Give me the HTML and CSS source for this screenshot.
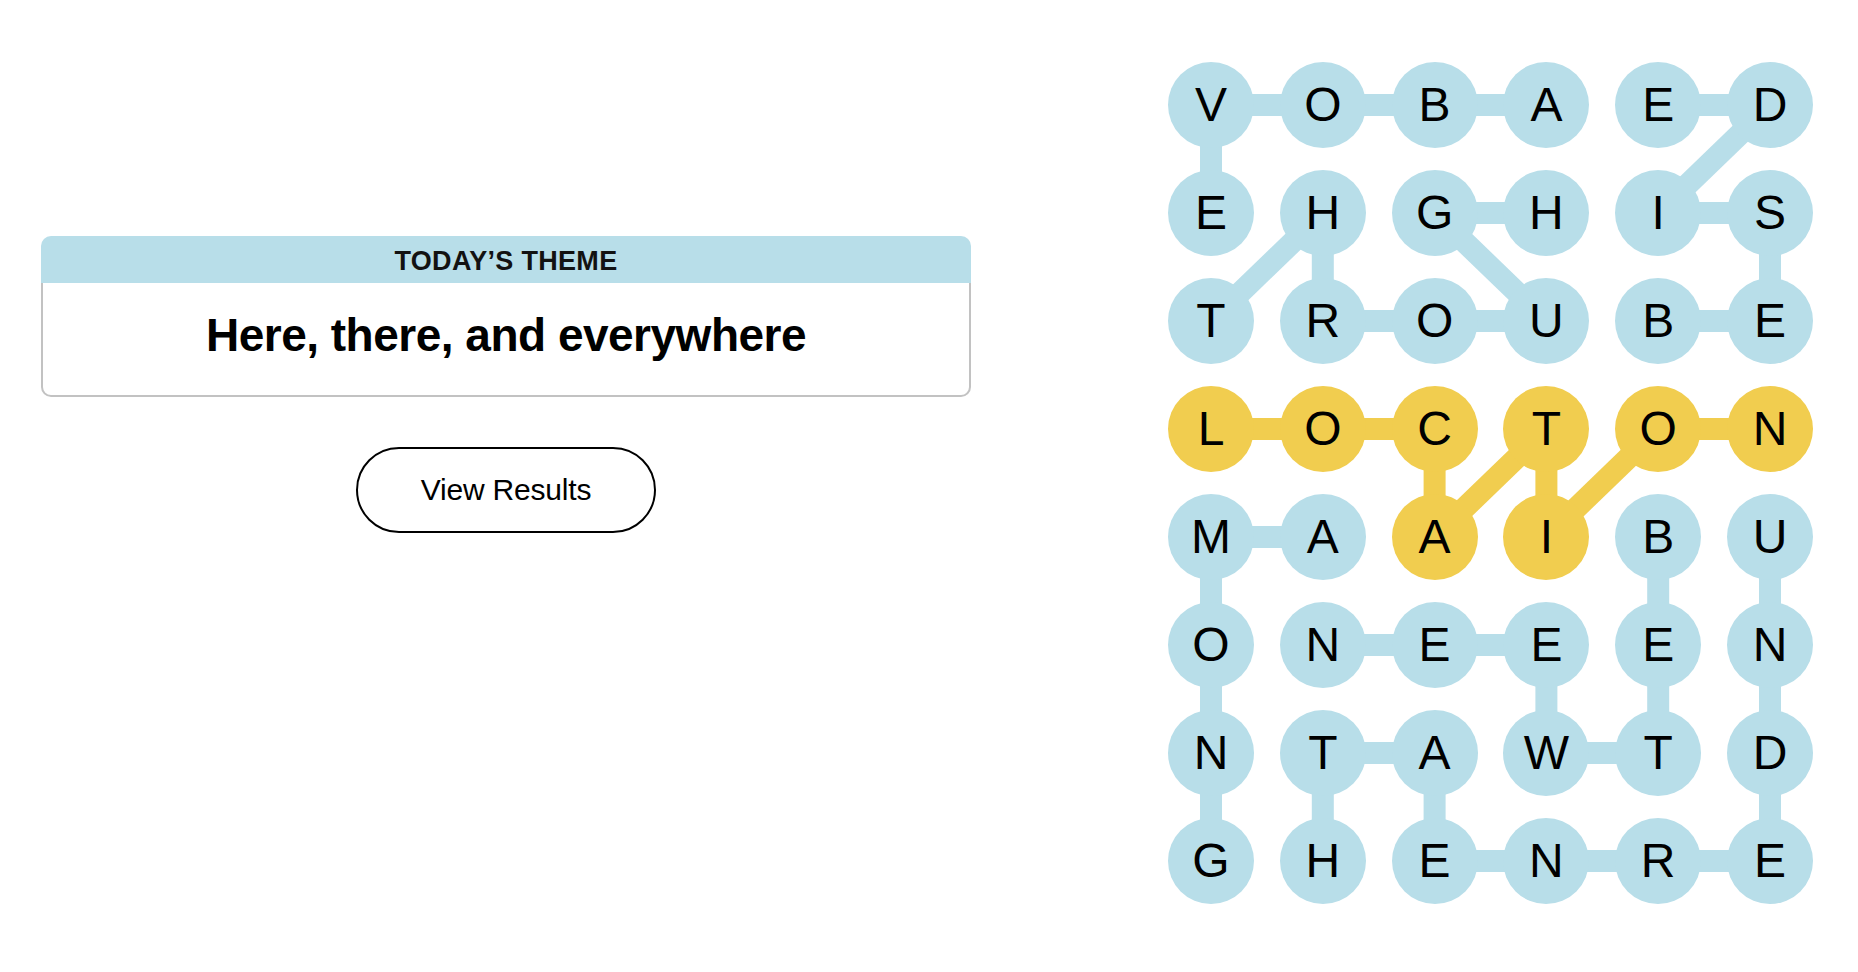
FILE: index.html
```html
<!DOCTYPE html>
<html lang="en">
<head>
  <meta charset="UTF-8">
  <title>Strands</title>
  <meta name="viewport" content="width=device-width, initial-scale=1.0">
  <link rel="stylesheet" href="styles.css">
</head>
<body>
  <main class="game">
    <!-- Тема дня -->
    <section class="theme-panel">
      <div class="theme-card">
        <div class="theme-head">TODAY’S THEME</div>
        <div class="theme-body">
          <h1>Here, there, and everywhere</h1>
        </div>
      </div>
      <button class="results-btn" type="button">View Results</button>
    </section>

    <!-- Поле с буквами -->
    <section class="board">
      <svg class="links" viewBox="0 0 645 842" width="645" height="842" aria-hidden="true">
        <g class="found">
          <line x1="43" y1="43" x2="378.4" y2="43"/>
          <line x1="490.2" y1="43" x2="602" y2="43"/>
          <line x1="43" y1="43" x2="43" y2="151"/>
          <line x1="602" y1="43" x2="490.2" y2="151"/>
          <line x1="154.8" y1="151" x2="43" y2="259"/>
          <line x1="154.8" y1="151" x2="154.8" y2="259"/>
          <line x1="266.6" y1="151" x2="378.4" y2="151"/>
          <line x1="266.6" y1="151" x2="378.4" y2="259"/>
          <line x1="490.2" y1="151" x2="602" y2="151"/>
          <line x1="602" y1="151" x2="602" y2="259"/>
          <line x1="154.8" y1="259" x2="378.4" y2="259"/>
          <line x1="490.2" y1="259" x2="602" y2="259"/>
          <line x1="43" y1="475" x2="154.8" y2="475"/>
          <line x1="43" y1="475" x2="43" y2="799"/>
          <line x1="490.2" y1="475" x2="490.2" y2="691"/>
          <line x1="378.4" y1="691" x2="490.2" y2="691"/>
          <line x1="378.4" y1="583" x2="378.4" y2="691"/>
          <line x1="154.8" y1="583" x2="378.4" y2="583"/>
          <line x1="602" y1="475" x2="602" y2="799"/>
          <line x1="266.6" y1="799" x2="602" y2="799"/>
          <line x1="266.6" y1="691" x2="266.6" y2="799"/>
          <line x1="154.8" y1="691" x2="266.6" y2="691"/>
          <line x1="154.8" y1="691" x2="154.8" y2="799"/>
        </g>
        <g class="spangram">
          <line x1="43" y1="367" x2="266.6" y2="367"/>
          <line x1="266.6" y1="367" x2="266.6" y2="475"/>
          <line x1="266.6" y1="475" x2="378.4" y2="367"/>
          <line x1="378.4" y1="367" x2="378.4" y2="475"/>
          <line x1="378.4" y1="475" x2="490.2" y2="367"/>
          <line x1="490.2" y1="367" x2="602" y2="367"/>
        </g>
      </svg>

      <div class="cell">V</div><div class="cell">O</div><div class="cell">B</div><div class="cell">A</div><div class="cell">E</div><div class="cell">D</div>
      <div class="cell">E</div><div class="cell">H</div><div class="cell">G</div><div class="cell">H</div><div class="cell">I</div><div class="cell">S</div>
      <div class="cell">T</div><div class="cell">R</div><div class="cell">O</div><div class="cell">U</div><div class="cell">B</div><div class="cell">E</div>
      <div class="cell gold">L</div><div class="cell gold">O</div><div class="cell gold">C</div><div class="cell gold">T</div><div class="cell gold">O</div><div class="cell gold">N</div>
      <div class="cell">M</div><div class="cell">A</div><div class="cell gold">A</div><div class="cell gold">I</div><div class="cell">B</div><div class="cell">U</div>
      <div class="cell">O</div><div class="cell">N</div><div class="cell">E</div><div class="cell">E</div><div class="cell">E</div><div class="cell">N</div>
      <div class="cell">N</div><div class="cell">T</div><div class="cell">A</div><div class="cell">W</div><div class="cell">T</div><div class="cell">D</div>
      <div class="cell">G</div><div class="cell">H</div><div class="cell">E</div><div class="cell">N</div><div class="cell">R</div><div class="cell">E</div>
    </section>
  </main>
</body>
</html>
```

FILE: styles.css
```css
html, body {
  margin: 0;
  padding: 0;
  background: #fff;
}
body {
  font-family: "Liberation Sans", Arial, sans-serif;
  color: #000;
}
.game {
  display: flex;
  align-items: flex-start;
  padding: 62px 0 0 41px;
}
/* Левая колонка с темой */
.theme-panel {
  width: 930px;
  margin-top: 174px;
  display: flex;
  flex-direction: column;
  align-items: center;
}
.theme-card {
  width: 100%;
}
.theme-head {
  box-sizing: border-box;
  height: 47px;
  padding-top: 3px;
  background: #b8dee9;
  border-radius: 10px 10px 0 0;
  display: flex;
  align-items: center;
  justify-content: center;
  font-size: 27px;
  font-weight: 700;
  letter-spacing: .3px;
  color: #121212;
}
.theme-body {
  box-sizing: border-box;
  height: 114px;
  border: 2px solid #c2c2c2;
  border-top: none;
  border-radius: 0 0 10px 10px;
  display: flex;
  align-items: center;
  justify-content: center;
  padding-bottom: 8px;
}
.theme-body h1 {
  margin: 0;
  font-size: 46px;
  font-weight: 700;
  letter-spacing: -.5px;
}
.results-btn {
  margin-top: 50px;
  width: 300px;
  height: 86px;
  border: 2px solid #000;
  border-radius: 43px;
  background: #fff;
  font-family: inherit;
  font-size: 30px;
  letter-spacing: -.2px;
  color: #000;
  cursor: pointer;
}
/* Сетка букв */
.board {
  position: relative;
  margin-left: 197px;
  display: grid;
  grid-template-columns: repeat(6, 86px);
  grid-auto-rows: 86px;
  column-gap: 25.8px;
  row-gap: 22px;
}
.links {
  position: absolute;
  top: 0; left: 0;
  z-index: 0;
}
.links line {
  stroke-width: 22;
  stroke-linecap: butt;
}
.links .found line { stroke: #b8dee9; }
.links .spangram line { stroke: #f1cd4f; }
.cell {
  position: relative;
  z-index: 1;
  width: 86px;
  height: 86px;
  border-radius: 50%;
  background: #b8dee9;
  display: flex;
  align-items: center;
  justify-content: center;
  font-size: 48px;
  line-height: 1;
  color: #000;
}
.cell.gold {
  background: #f1cd4f;
}
```
